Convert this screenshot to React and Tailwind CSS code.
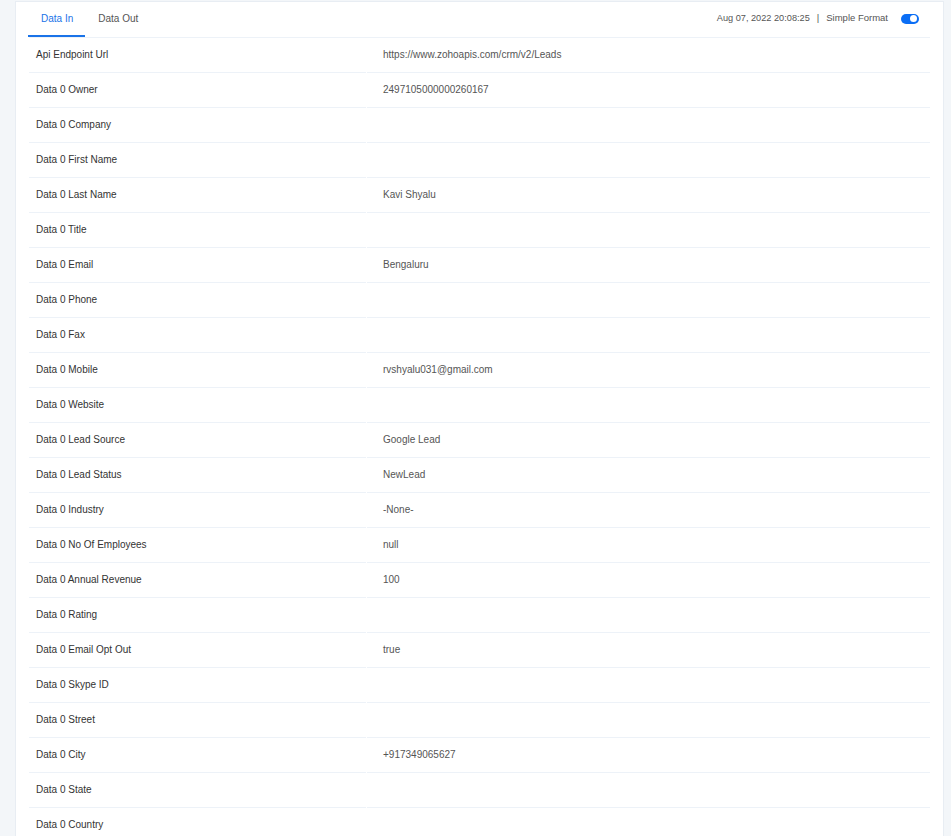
import React, { useState } from "react";

const rows = [
  ["Api Endpoint Url", "https://www.zohoapis.com/crm/v2/Leads"],
  ["Data 0 Owner", "2497105000000260167"],
  ["Data 0 Company", ""],
  ["Data 0 First Name", ""],
  ["Data 0 Last Name", "Kavi Shyalu"],
  ["Data 0 Title", ""],
  ["Data 0 Email", "Bengaluru"],
  ["Data 0 Phone", ""],
  ["Data 0 Fax", ""],
  ["Data 0 Mobile", "rvshyalu031@gmail.com"],
  ["Data 0 Website", ""],
  ["Data 0 Lead Source", "Google Lead"],
  ["Data 0 Lead Status", "NewLead"],
  ["Data 0 Industry", "-None-"],
  ["Data 0 No Of Employees", "null"],
  ["Data 0 Annual Revenue", "100"],
  ["Data 0 Rating", ""],
  ["Data 0 Email Opt Out", "true"],
  ["Data 0 Skype ID", ""],
  ["Data 0 Street", ""],
  ["Data 0 City", "+917349065627"],
  ["Data 0 State", ""],
  ["Data 0 Country", ""],
];

const App = () => {
  const [tab, setTab] = useState("in");
  const [simple, setSimple] = useState(true);

  return (
    <div className="min-h-screen bg-[#f3f6f9] pl-[15px] pr-2 pt-px font-['Liberation_Sans',Arial,sans-serif] text-[10px]">
      <div className="bg-white border border-[#e8edf3] border-b-0 w-[929px] min-h-[900px] px-[13px]">
        {/* Tabs + header info */}
        <div className="flex items-center justify-between h-[36px] border-b border-[#edf2f8]">
          <div className="flex h-full -ml-px">
            <button
              onClick={() => setTab("in")}
              className={`h-full pl-[13px] pr-[12px] border-b-2 ${tab === "in" ? "border-[#1a73e8] text-[#1a73e8]" : "border-transparent text-[#555]"}`}
            >
              Data In
            </button>
            <button
              onClick={() => setTab("out")}
              className={`h-full pl-[13px] pr-[12px] border-b-2 ${tab === "out" ? "border-[#1a73e8] text-[#1a73e8]" : "border-transparent text-[#555]"}`}
            >
              Data Out
            </button>
          </div>
          <div className="flex items-center text-[#555] text-[9.5px] pr-[11px] pb-[2px]">
            <span className="text-[9.2px]">Aug 07, 2022 20:08:25</span>
            <span className="mx-[7px]">|</span>
            <span>Simple Format</span>
            <button
              onClick={() => setSimple(!simple)}
              className={`ml-[13px] w-[18px] h-[10px] rounded-full flex items-center px-[2px] ${simple ? "bg-[#0b6ef5] justify-end" : "bg-[#ccd3dc] justify-start"}`}
            >
              <span className="w-[7px] h-[7px] rounded-full bg-white" />
            </button>
          </div>
        </div>

        {/* Key / value list */}
        <div className="grid grid-cols-[337px_1fr] gap-x-px">
          {rows.map(([label, value]) => (
            <React.Fragment key={label}>
              <div className="h-[35px] flex items-center pl-[7px] pb-[2px] border-b border-[#edf2f8] text-[#333]">
                {label}
              </div>
              <div className="h-[35px] flex items-center pl-[16px] pb-[2px] border-b border-[#edf2f8] text-[#555]">
                {value}
              </div>
            </React.Fragment>
          ))}
        </div>
      </div>
    </div>
  );
};

export default App;
